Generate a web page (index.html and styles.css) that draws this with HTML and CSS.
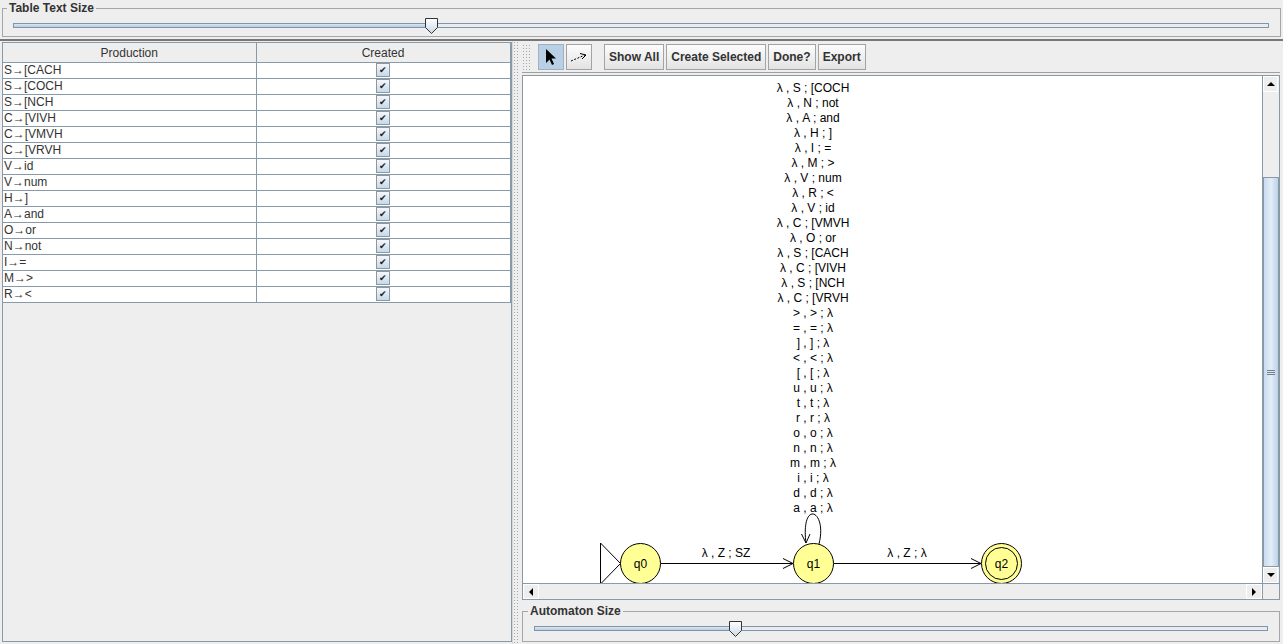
FILE: index.html
```html
<!DOCTYPE html>
<html>
<head>
<meta charset="utf-8">
<link rel="stylesheet" href="styles.css">
</head>
<body>
<div class="app">
  <fieldset class="titled top-panel">
    <legend>Table Text Size</legend>
    <div class="slider">
      <div class="track"><div class="fill" style="width:418px"></div></div>
      <svg class="thumb" style="left:412px" width="13" height="16" viewBox="0 0 13 16"><defs><linearGradient id="tg1" x1="0" y1="0" x2="0" y2="1"><stop offset="0" stop-color="#ffffff"/><stop offset="1" stop-color="#c9d9ea"/></linearGradient></defs><path d="M0.5 0.5 H12.5 V9.5 L6.5 15.5 L0.5 9.5 Z" fill="url(#tg1)" stroke="#333"/></svg>
    </div>
  </fieldset>
  <div class="split">
    <div class="left-pane">
      <div class="table-scroll">
        <table class="grid">
          <colgroup><col class="c1"><col class="c2"></colgroup>
          <thead><tr><th>Production</th><th>Created</th></tr></thead>
          <tbody>
            <tr><td>S→[CACH</td><td class="chk"><span class="cb">✔</span></td></tr>
            <tr><td>S→[COCH</td><td class="chk"><span class="cb">✔</span></td></tr>
            <tr><td>S→[NCH</td><td class="chk"><span class="cb">✔</span></td></tr>
            <tr><td>C→[VIVH</td><td class="chk"><span class="cb">✔</span></td></tr>
            <tr><td>C→[VMVH</td><td class="chk"><span class="cb">✔</span></td></tr>
            <tr><td>C→[VRVH</td><td class="chk"><span class="cb">✔</span></td></tr>
            <tr><td>V→id</td><td class="chk"><span class="cb">✔</span></td></tr>
            <tr><td>V→num</td><td class="chk"><span class="cb">✔</span></td></tr>
            <tr><td>H→]</td><td class="chk"><span class="cb">✔</span></td></tr>
            <tr><td>A→and</td><td class="chk"><span class="cb">✔</span></td></tr>
            <tr><td>O→or</td><td class="chk"><span class="cb">✔</span></td></tr>
            <tr><td>N→not</td><td class="chk"><span class="cb">✔</span></td></tr>
            <tr><td>I→=</td><td class="chk"><span class="cb">✔</span></td></tr>
            <tr><td>M→&gt;</td><td class="chk"><span class="cb">✔</span></td></tr>
            <tr><td>R→&lt;</td><td class="chk"><span class="cb">✔</span></td></tr>
          </tbody>
        </table>
      </div>
    </div>
    <div class="divider"></div>
    <div class="right-pane">
      <div class="toolbar">
        <div class="grip"></div>
        <button class="tbtn icon selected" title="Attribute Editor">
          <svg width="14" height="18" viewBox="0 0 14 18"><path d="M2 1 L2 15 L5.5 11.5 L8 17 L10 16 L7.5 10.5 L12 10.5 Z" fill="#000"/></svg>
        </button>
        <button class="tbtn icon" title="Transition Creator">
          <svg width="20" height="14" viewBox="0 0 20 14"><path d="M2 11 L16 5" stroke="#000" stroke-width="1" stroke-dasharray="2 1.5" fill="none"/><path d="M11 3.5 L17 5 L13 9" stroke="#000" fill="none"/></svg>
        </button>
        <div class="tsep"></div>
        <button class="tbtn text">Show All</button>
        <button class="tbtn text">Create Selected</button>
        <button class="tbtn text">Done?</button>
        <button class="tbtn text">Export</button>
      </div>
      <div class="scrollpane">
        <div class="sp-main">
          <div class="viewport">
            <svg class="canvas" width="739" height="509" viewBox="524 76 739 509">
              <g class="labels" font-family="Liberation Sans, Arial, sans-serif" font-size="12" text-anchor="middle" fill="#000">
                <text x="814" y="92">λ , S ; [COCH</text>
                <text x="814" y="107">λ , N ; not</text>
                <text x="814" y="122">λ , A ; and</text>
                <text x="814" y="137">λ , H ; ]</text>
                <text x="814" y="152">λ , I ; =</text>
                <text x="814" y="167">λ , M ; &gt;</text>
                <text x="814" y="182">λ , V ; num</text>
                <text x="814" y="197">λ , R ; &lt;</text>
                <text x="814" y="212">λ , V ; id</text>
                <text x="814" y="227">λ , C ; [VMVH</text>
                <text x="814" y="242">λ , O ; or</text>
                <text x="814" y="257">λ , S ; [CACH</text>
                <text x="814" y="272">λ , C ; [VIVH</text>
                <text x="814" y="287">λ , S ; [NCH</text>
                <text x="814" y="302">λ , C ; [VRVH</text>
                <text x="814" y="317">&gt; , &gt; ; λ</text>
                <text x="814" y="332">= , = ; λ</text>
                <text x="814" y="347">] , ] ; λ</text>
                <text x="814" y="362">&lt; , &lt; ; λ</text>
                <text x="814" y="377">[ , [ ; λ</text>
                <text x="814" y="392">u , u ; λ</text>
                <text x="814" y="407">t , t ; λ</text>
                <text x="814" y="422">r , r ; λ</text>
                <text x="814" y="437">o , o ; λ</text>
                <text x="814" y="452">n , n ; λ</text>
                <text x="814" y="467">m , m ; λ</text>
                <text x="814" y="482">i , i ; λ</text>
                <text x="814" y="497">d , d ; λ</text>
                <text x="814" y="512">a , a ; λ</text>
                <text x="727" y="557">λ , Z ; SZ</text>
                <text x="908" y="557">λ , Z ; λ</text>
              </g>
              <g stroke="#000" stroke-width="1" fill="none">
                <path d="M820 544 C 825 524, 818 513, 813 514 C 807 515, 805 528, 807 543"/>
                <path d="M802.5 534 L807 543 L811 534"/>
                <path d="M661.5 563.5 H794"/>
                <path d="M784 558.5 L794 563.5 L784 568.5"/>
                <path d="M834.5 563.5 H982"/>
                <path d="M972 558.5 L982 563.5 L972 568.5"/>
              </g>
              <path d="M601.5 543 L621.5 563.5 L601.5 584 Z" fill="#fff" stroke="#000"/>
              <g stroke="#000" stroke-width="1" fill="#ffff96">
                <circle cx="641.5" cy="563.5" r="20"/>
                <circle cx="814.5" cy="563.5" r="20"/>
                <circle cx="1002.5" cy="563.5" r="20"/>
                <circle cx="1002.5" cy="563.5" r="16"/>
              </g>
              <g font-family="Liberation Sans, Arial, sans-serif" font-size="12" text-anchor="middle" fill="#000">
                <text x="641.5" y="568">q0</text>
                <text x="814.5" y="568">q1</text>
                <text x="1002.5" y="568">q2</text>
              </g>
            </svg>
          </div>
          <div class="vscroll">
            <div class="sbtn up"><span class="tri-up"></span></div>
            <div class="vtrack"><div class="vthumb"><span class="grip-lines"></span></div></div>
            <div class="sbtn down"><span class="tri-down"></span></div>
          </div>
        </div>
        <div class="sp-bottom">
          <div class="hscroll">
            <div class="sbtn left"><span class="tri-left"></span></div>
            <div class="htrack"></div>
            <div class="sbtn right"><span class="tri-right"></span></div>
          </div>
          <div class="corner"></div>
        </div>
      </div>
      <fieldset class="titled bottom-panel">
        <legend>Automaton Size</legend>
        <div class="slider">
          <div class="track"><div class="fill" style="width:201px"></div></div>
          <svg class="thumb" style="left:195px" width="13" height="16" viewBox="0 0 13 16"><defs><linearGradient id="tg2" x1="0" y1="0" x2="0" y2="1"><stop offset="0" stop-color="#ffffff"/><stop offset="1" stop-color="#c9d9ea"/></linearGradient></defs><path d="M0.5 0.5 H12.5 V9.5 L6.5 15.5 L0.5 9.5 Z" fill="url(#tg2)" stroke="#333"/></svg>
        </div>
      </fieldset>
    </div>
  </div>
</div>
</body>
</html>
```
FILE: styles.css
```css
html, body {
  margin: 0;
  padding: 0;
}
body {
  width: 1283px;
  height: 644px;
  overflow: hidden;
  background: #eeeeee;
  font-family: "Liberation Sans", Arial, sans-serif;
  font-size: 12px;
  color: #000;
}
.app {
  display: flex;
  flex-direction: column;
  height: 644px;
}
.titled {
  box-sizing: border-box;
  border: 1px solid #a6a6a6;
  min-width: 0;
}
.titled legend {
  font-weight: bold;
  font-size: 12px;
  line-height: 16px;
  padding: 0 2px;
  color: #333333;
}
.top-panel {
  margin: 0 2px 0 2px;
  padding: 0 11px 0 10px;
  height: 37px;
}
.top-panel legend {
  margin-left: -6px;
}
.slider {
  position: relative;
  height: 20px;
}
.track {
  position: absolute;
  left: 0;
  right: 0;
  top: 7px;
  height: 5px;
  box-sizing: border-box;
  border: 1px solid #8294aa;
  background: #e8ecf0;
}
.fill {
  height: 100%;
  background: linear-gradient(#dbe6f1, #b9cde2);
}
.thumb {
  position: absolute;
  top: 2px;
}
.split {
  flex: 1;
  display: flex;
  border-top: 2px solid #777777;
  margin-top: 2px;
}
.left-pane {
  width: 512px;
  padding: 1px 2px 2px 2px;
  box-sizing: border-box;
  display: flex;
}
.table-scroll {
  flex: 1;
  border: 1px solid #8a99a6;
  background: #eeeeee;
}
.grid {
  border-collapse: collapse;
  table-layout: fixed;
  width: 507px;
  font-size: 12px;
}
.grid col.c1 { width: 253px; }
.grid col.c2 { width: 254px; }
.grid th {
  height: 19px;
  padding: 0;
  font-weight: normal;
  background: #eeeeee;
  border-right: 1px solid #8a99a6;
  border-bottom: 1px solid #8a99a6;
  color: #333333;
}
.grid td {
  height: 15px;
  padding: 0 0 0 1px;
  background: #ffffff;
  border-right: 1px solid #8a99a6;
  border-bottom: 1px solid #8a99a6;
  white-space: nowrap;
  color: #333333;
  line-height: 15px;
}
.grid td.chk {
  text-align: center;
  padding: 0;
}
.cb {
  display: inline-block;
  width: 12px;
  height: 12px;
  border: 1px solid #8a99a6;
  background: linear-gradient(#f4f8fc, #c8d8e8);
  font-size: 9px;
  line-height: 12px;
  text-align: center;
  vertical-align: middle;
  color: #222;
  margin-top: -1px;
}
.divider {
  width: 8px;
  background-color: #eeeeee;
  background-image: radial-gradient(circle, #a8a8a8 0.7px, transparent 0.9px);
  background-size: 3px 3px;
  border-left: 1px solid #d6d6d6;
}
.right-pane {
  flex: 1;
  display: flex;
  flex-direction: column;
  padding: 0 3px 2px 3px;
}
.toolbar {
  height: 31px;
  display: flex;
  align-items: center;
  gap: 2px;
  border-bottom: 1px solid #a0a0a0;
}
.grip {
  width: 9px;
  height: 26px;
  margin-right: 5px;
  background-image: radial-gradient(circle, #a8a8a8 0.7px, transparent 0.9px);
  background-size: 3px 3px;
}
.tbtn {
  height: 26px;
  box-sizing: border-box;
  border: 1px solid #a3a3a3;
  background: linear-gradient(#fcfcfc, #e3e3e3);
  font-family: "Liberation Sans", Arial, sans-serif;
  font-weight: bold;
  font-size: 12px;
  color: #333333;
  padding: 0 4px;
  margin: 0;
  display: flex;
  align-items: center;
  justify-content: center;
}
.tbtn.icon {
  width: 26px;
  padding: 0;
}
.tbtn.selected {
  background: #b8cfe5;
  border-color: #9fb0c2;
}
.tsep {
  width: 8px;
}
.scrollpane {
  margin-top: 2px;
  border: 1px solid #8a99a6;
  display: flex;
  flex-direction: column;
  height: 525px;
  box-sizing: border-box;
}
.sp-main {
  flex: 1;
  display: flex;
  min-height: 0;
}
.viewport {
  flex: 1;
  background: #ffffff;
  overflow: hidden;
}
.canvas {
  display: block;
}
.vscroll {
  width: 16px;
  display: flex;
  flex-direction: column;
  background: #eeeeee;
  border-left: 1px solid #8a99a6;
}
.sbtn {
  width: 16px;
  height: 16px;
  display: flex;
  align-items: center;
  justify-content: center;
  box-sizing: border-box;
  background: #eeeeee;
  border: 1px solid #ffffff;
}
.vscroll .sbtn { width: 15px; }
.vtrack {
  flex: 1;
  display: flex;
  flex-direction: column;
  padding-top: 85px;
  padding-bottom: 0;
}
.vthumb {
  flex: 1;
  border: 1px solid #8a99a6;
  background: linear-gradient(90deg, #c8dbee, #e4eef8 50%, #bcd2e8);
  display: flex;
  align-items: center;
  justify-content: center;
}
.grip-lines {
  width: 8px;
  height: 5px;
  background: repeating-linear-gradient(#6b7f95 0 1px, transparent 1px 2px);
}
.tri-up { width: 0; height: 0; border-left: 4px solid transparent; border-right: 4px solid transparent; border-bottom: 4px solid #000; }
.tri-down { width: 0; height: 0; border-left: 4px solid transparent; border-right: 4px solid transparent; border-top: 4px solid #000; }
.tri-left { width: 0; height: 0; border-top: 4px solid transparent; border-bottom: 4px solid transparent; border-right: 4px solid #000; }
.tri-right { width: 0; height: 0; border-top: 4px solid transparent; border-bottom: 4px solid transparent; border-left: 4px solid #000; }
.sp-bottom {
  height: 15px;
  display: flex;
  border-top: 1px solid #8a99a6;
}
.hscroll {
  flex: 1;
  display: flex;
  background: #eeeeee;
}
.hscroll .sbtn { height: 15px; }
.htrack { flex: 1; }
.corner {
  width: 16px;
  background: #eeeeee;
  border-left: 1px solid #8a99a6;
}
.bottom-panel {
  margin: 3px 0 0 0;
  padding: 0 11px 0 11px;
  flex: 1;
}
.bottom-panel legend {
  margin-left: -6px;
}
```
